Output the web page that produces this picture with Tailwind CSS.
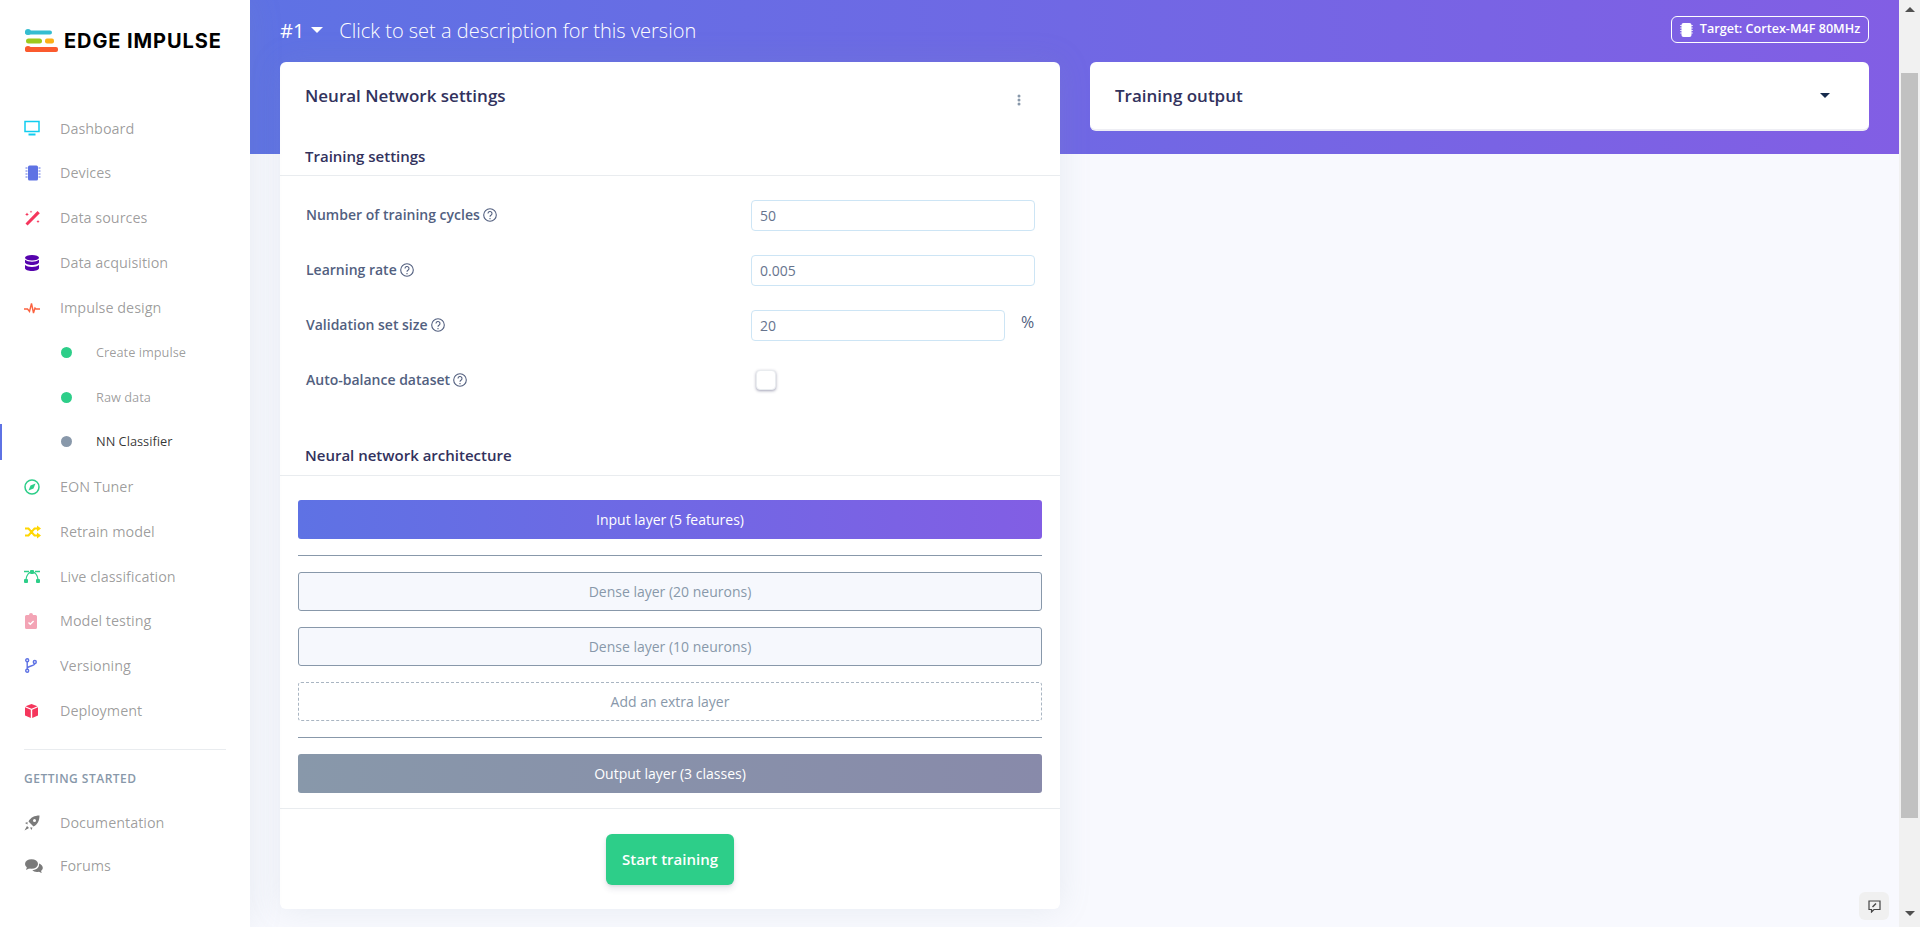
<!DOCTYPE html>
<html lang="en">
<head>
  <meta charset="UTF-8" />
  <title>NN Classifier - Edge Impulse</title>
  <script src="https://cdn.jsdelivr.net/npm/@tailwindcss/browser@4"></script>
</head>
<body class="h-[927px] overflow-hidden bg-[#f8f9fe] font-['Open_Sans',sans-serif]">
<div class="flex h-[927px]">

  <!-- sidebar -->
  <aside class="w-[250px] shrink-0 bg-white flex flex-col shadow-[0_0_32px_rgba(136,152,170,0.15)] z-10">
    <div class="h-[106px] pt-[28px] pl-[24px] flex items-start gap-[4px]">
      <svg width="36" height="26" viewBox="0 0 36 26">
        <rect x="1" y="2.500" width="27" height="4" rx="2" fill="#35bdd0"/><circle cx="4" cy="4" r="3" fill="#35bdd0"/>
        <rect x="2" y="10.500" width="16" height="5" rx="2.500" fill="#9dc91c"/>
        <rect x="21" y="10.500" width="9" height="5" rx="2" fill="#fbb017"/>
        <rect x="1" y="19" width="33" height="5" rx="2" fill="#fb5a2e"/><circle cx="4" cy="21" r="3" fill="#fb5a2e"/>
      </svg>
      <span class="font-['Inter',sans-serif] font-bold text-[20px] leading-[24px] tracking-[0.9px] text-black mt-[1px]">EDGE IMPULSE</span>
    </div>
    <nav class="text-[14.4px] text-black/40 flex flex-col">
      <a class="h-[44.8px] flex items-center"><span class="w-[60px] pl-[24px]"><svg class="w-[16px] h-[16px]" viewBox="0 0 16 16" fill="none" stroke="#11cdef" stroke-width="1.500"><rect x="1" y="1.500" width="14" height="10"/><path d="M4.500 14.500h7" stroke-width="2"/></svg></span>Dashboard</a>
      <a class="h-[44.8px] flex items-center"><span class="w-[60px] pl-[25px]"><svg class="w-[16px] h-[16px]" viewBox="0 0 16 16" fill="#5e72e4"><rect x="3" y="0.500" width="10" height="15" rx="1.500"/><path d="M0.500 3h2M0.500 6h2M0.500 9h2M0.500 12h2M13.500 3h2M13.500 6h2M13.500 9h2M13.500 12h2" stroke="#5e72e4"/></svg></span>Devices</a>
      <a class="h-[44.8px] flex items-center"><span class="w-[60px] pl-[25px]"><svg class="w-[16px] h-[16px]" viewBox="0 0 16 16" fill="#f5365c"><path d="M0.500 13.500 12.500 1l2.300 2.200L2.600 15.500z"/><path d="M2 2.500l.6 1.300 1.300.6-1.300.6L2 6.300l-.6-1.300L.1 4.400l1.300-.6zM6 .5l.4.9.9.4-.9.4L6 3.100l-.4-.9-.9-.4.9-.4zM13 10l.5 1.100 1.100.5-1.100.5-.5 1.100-.5-1.100-1.100-.5 1.100-.5z"/></svg></span>Data sources</a>
      <a class="h-[44.8px] flex items-center"><span class="w-[60px] pl-[25px]"><svg class="w-[14px] h-[16px]" viewBox="0 0 14 16" fill="#5603ad"><ellipse cx="7" cy="2.800" rx="7" ry="2.800"/><path d="M0 4.800v2.400C0 8.700 3.100 10 7 10s7-1.300 7-2.800V4.800C12.500 6 9.900 6.700 7 6.700S1.500 6 0 4.800zM0 10v3.200C0 14.700 3.100 16 7 16s7-1.300 7-2.800V10c-1.500 1.200-4.100 1.900-7 1.900S1.500 11.200 0 10z"/></svg></span>Data acquisition</a>
      <a class="h-[44.8px] flex items-center"><span class="w-[60px] pl-[24px]"><svg class="w-[16px] h-[12px]" viewBox="0 0 16 12" fill="none" stroke="#fb6340" stroke-width="1.400"><path d="M0 7h3.500L5.500 9.500 7.500 1.500 9.500 11 11 6l1 1h4"/></svg></span>Impulse design</a>
      <a class="h-[44.8px] flex items-center text-[12.8px] text-black/40"><span class="w-[96px] pl-[61px]"><span class="block w-[11px] h-[11px] rounded-full bg-[#2dce89]"></span></span>Create impulse</a>
      <a class="h-[44.8px] flex items-center text-[12.8px] text-black/40"><span class="w-[96px] pl-[61px]"><span class="block w-[11px] h-[11px] rounded-full bg-[#2dce89]"></span></span>Raw data</a>
      <a class="h-[44.8px] flex items-center text-[12.8px] text-black/80 relative"><span class="absolute left-0 top-[4px] w-[2px] h-[36px] bg-[#5e72e4]"></span><span class="w-[96px] pl-[61px]"><span class="block w-[11px] h-[11px] rounded-full bg-[#8898aa]"></span></span>NN Classifier</a>
      <a class="h-[44.8px] flex items-center"><span class="w-[60px] pl-[24px]"><svg class="w-[16px] h-[16px]" viewBox="0 0 16 16" fill="none" stroke="#2dce89" stroke-width="1.500"><circle cx="8" cy="8" r="7"/><path d="M11.500 4.500 9.500 9.500 4.500 11.500 6.500 6.500z" fill="#2dce89" stroke="none"/></svg></span>EON Tuner</a>
      <a class="h-[44.8px] flex items-center"><span class="w-[60px] pl-[25px]"><svg class="w-[16px] h-[14px]" viewBox="0 0 16 14" fill="none" stroke="#ffd600" stroke-width="2"><path d="M0 3.500h3.500l6 7H13M0 10.500h3.500l6-7H13"/><path d="M12 0.500 16 3.500l-4 3zM12 7.500l4 3-4 3z" fill="#ffd600" stroke="none"/></svg></span>Retrain model</a>
      <a class="h-[44.8px] flex items-center"><span class="w-[60px] pl-[24px]"><svg class="w-[16px] h-[14px]" viewBox="0 0 16 14" fill="none" stroke="#2dce89" stroke-width="1.300"><path d="M2 10.500C2.500 6 5 3 8 3s5.500 3 6 7.500M0 2.500h5M11 2.500h5"/><rect x="0" y="10" width="4" height="4" rx="1" fill="#2dce89" stroke="none"/><rect x="12" y="10" width="4" height="4" rx="1" fill="#2dce89" stroke="none"/><rect x="6" y="1" width="4" height="4" rx="1" fill="#2dce89" stroke="none"/></svg></span>Live classification</a>
      <a class="h-[44.8px] flex items-center"><span class="w-[60px] pl-[25px]"><svg class="w-[12px] h-[16px]" viewBox="0 0 12 16"><path d="M1.500 2H4a2 2 0 0 1 4 0h2.500A1.500 1.500 0 0 1 12 3.500v11a1.500 1.500 0 0 1-1.500 1.500h-9A1.500 1.500 0 0 1 0 14.500v-11A1.500 1.500 0 0 1 1.500 2z" fill="#f3a4b5"/><path d="M3.500 9.500l1.800 1.800 3.300-3.300" fill="none" stroke="#fff" stroke-width="1.400"/></svg></span>Model testing</a>
      <a class="h-[44.8px] flex items-center"><span class="w-[60px] pl-[25px]"><svg class="w-[12px] h-[15px]" viewBox="0 0 12 15" fill="none" stroke="#5e72e4" stroke-width="1.400"><circle cx="2.200" cy="2.200" r="1.500"/><circle cx="2.200" cy="12.800" r="1.500"/><circle cx="9.800" cy="4" r="1.500"/><path d="M2.200 3.700v7.600M9.800 5.500c0 3-7.600 2-7.600 5"/></svg></span>Versioning</a>
      <a class="h-[44.8px] flex items-center"><span class="w-[60px] pl-[25px]"><svg class="w-[13px] h-[14px]" viewBox="0 0 13 14" fill="#f5365c"><path d="M6.500 0 12.500 2.300 6.500 4.800.5 2.300zM0 3.300l5.800 2.400V14L0 11.500zM13 3.300 7.200 5.700V14l5.800-2.500z"/></svg></span>Deployment</a>
    </nav>
    <div class="mx-[24px] mt-[15.6px] border-t border-[#e9ecef]"></div>
    <h6 class="pl-[24px] mt-[21px] mb-[15px] text-[12px] leading-[16px] font-semibold tracking-[0.5px] text-[#8898aa]">GETTING STARTED</h6>
    <nav class="text-[14.4px] text-black/40 flex flex-col">
      <a class="h-[43px] flex items-center"><span class="w-[60px] pl-[24px]"><svg class="w-[16px] h-[16px]" viewBox="0 0 16 16" fill="#7a7a7a"><path d="M15.500.5C10.500.5 6.500 2.500 4.500 6.500l5 5c4-2 6-6 6-11zM10.500 4a1.500 1.500 0 1 1 0 3 1.500 1.500 0 0 1 0-3zM3.500 7 1 8l2.500 1.500zM8.500 12.500l-1 2.500L6 12.500zM3 11l2 2-4.500 2.500z"/></svg></span>Documentation</a>
      <a class="h-[43px] flex items-center"><span class="w-[60px] pl-[25px]"><svg class="w-[18px] h-[14px]" viewBox="0 0 18 14" fill="#7a7a7a"><ellipse cx="6.500" cy="5" rx="6.500" ry="4.800"/><path d="M2 8 1 11l4-2zM14 4.500c2.200.7 3.800 2.300 3.800 4.300 0 1.300-.7 2.400-1.800 3.200l.9 2-3-1.300c-.6.200-1.400.300-2 .300-2 0-3.700-.7-4.600-1.900 4 .1 7.300-2.700 6.700-6.600z"/></svg></span>Forums</a>
    </nav>
  </aside>

  <!-- main -->
  <main class="flex-1 relative">
    <div class="h-[154px] bg-[linear-gradient(87deg,#5e72e4,#825ee4)] pl-[30px] pr-[30px] flex items-start justify-between text-white">
      <div class="flex items-center h-[62px] text-[20px] font-light">
        <span class="font-normal">#1</span>
        <span class="ml-[7px] mr-[16px] w-0 h-0 border-x-[6px] border-x-transparent border-t-[6px] border-t-white mb-[2px]"></span>
        <span>Click to set a description for this version</span>
      </div>
      <div class="mt-[16px] h-[27px] w-[198px] border border-white rounded-[6px] flex items-center justify-center gap-[7px] text-[12.6px] font-semibold">
        <svg class="w-[13px] h-[14px]" viewBox="0 0 13 14" fill="#fff"><rect x="1.500" y="0" width="10" height="14" rx="2"/><path d="M0 2.500h13M0 5h13M0 7.500h13M0 10h13" stroke="#fff" stroke-width=".7"/></svg>
        Target: Cortex-M4F 80MHz
      </div>
    </div>

    <div class="-mt-[92px] px-[30px] flex gap-[30px] items-start">
      <!-- settings card -->
      <section class="w-[780px] h-[847px] bg-white rounded-[6px] shadow-[0_0_32px_rgba(136,152,170,0.15)]">
        <div class="h-[75px] pl-[25px] pr-[39px] pt-[22px] flex justify-between items-start">
          <h3 class="text-[17px] leading-[24px] font-semibold text-[#32325d]">Neural Network settings</h3>
          <svg class="w-[4px] h-[12px] mt-[10px]" viewBox="0 0 4 12" fill="#8898aa"><circle cx="2" cy="2" r="1.500"/><circle cx="2" cy="6" r="1.500"/><circle cx="2" cy="10" r="1.500"/></svg>
        </div>
        <div class="h-[39px] pl-[25px] border-b border-[#e9ecef]">
          <h4 class="text-[15px] leading-[20px] pt-[9px] font-semibold text-[#32325d]">Training settings</h4>
        </div>
        <form class="pl-[26px] pr-[25px] pt-[24px] flex flex-col gap-[24px] text-[14px] text-[#525f7f]">
          <div class="h-[31px] flex items-center">
            <label class="w-[445px] -mt-[2px] font-semibold flex items-center gap-[3px]">Number of training cycles <svg class="w-[14px] h-[14px]" viewBox="0 0 14 14" fill="none" stroke="#525f7f" stroke-width="1.100"><circle cx="7" cy="7" r="6.300"/><path d="M5 5.500a2 2 0 1 1 3 1.700c-.7.400-1 .8-1 1.500M7 10v1.200"/></svg></label>
            <input value="50" class="w-[284px] h-[31px] px-[8px] border border-[#cde5f5] rounded-[4px] text-[14px] text-[#67748e]" />
          </div>
          <div class="h-[31px] flex items-center">
            <label class="w-[445px] -mt-[2px] font-semibold flex items-center gap-[3px]">Learning rate <svg class="w-[14px] h-[14px]" viewBox="0 0 14 14" fill="none" stroke="#525f7f" stroke-width="1.100"><circle cx="7" cy="7" r="6.300"/><path d="M5 5.500a2 2 0 1 1 3 1.700c-.7.400-1 .8-1 1.500M7 10v1.200"/></svg></label>
            <input value="0.005" class="w-[284px] h-[31px] px-[8px] border border-[#cde5f5] rounded-[4px] text-[14px] text-[#67748e]" />
          </div>
          <div class="h-[31px] flex items-center">
            <label class="w-[445px] -mt-[2px] font-semibold flex items-center gap-[3px]">Validation set size <svg class="w-[14px] h-[14px]" viewBox="0 0 14 14" fill="none" stroke="#525f7f" stroke-width="1.100"><circle cx="7" cy="7" r="6.300"/><path d="M5 5.500a2 2 0 1 1 3 1.700c-.7.400-1 .8-1 1.500M7 10v1.200"/></svg></label>
            <input value="20" class="w-[254px] h-[31px] px-[8px] border border-[#cde5f5] rounded-[4px] text-[14px] text-[#67748e]" />
            <span class="ml-[16px] -mt-[7px] text-[16px]">%</span>
          </div>
          <div class="h-[31px] flex items-center">
            <label class="w-[445px] -mt-[2px] font-semibold flex items-center gap-[3px]">Auto-balance dataset <svg class="w-[14px] h-[14px]" viewBox="0 0 14 14" fill="none" stroke="#525f7f" stroke-width="1.100"><circle cx="7" cy="7" r="6.300"/><path d="M5 5.500a2 2 0 1 1 3 1.700c-.7.400-1 .8-1 1.500M7 10v1.200"/></svg></label>
            <span class="ml-[5px] -mt-[2px] w-[20px] h-[20px] bg-white rounded-[4px] border border-[#e9ecef] shadow-[0_1px_3px_rgba(50,50,93,0.45)]"></span>
          </div>
        </form>
        <div class="mt-[48px] h-[31px] pl-[25px] border-b border-[#e9ecef] box-content">
          <h4 class="text-[15px] leading-[20px] pt-[1px] font-semibold text-[#32325d]">Neural network architecture</h4>
        </div>
        <div class="px-[18px] pt-[24px] pb-[15px] flex flex-col border-b border-[#e9ecef] text-[14px]">
          <div class="h-[39px] rounded-[3px] bg-[linear-gradient(87deg,#5e72e4,#825ee4)] text-white flex items-center justify-center">Input layer (5 features)</div>
          <div class="my-[16px] border-t border-[#8898aa]"></div>
          <div class="h-[39px] rounded-[3px] bg-[#f6f8fd] border border-[#8898aa] text-[#8898aa] flex items-center justify-center">Dense layer (20 neurons)</div>
          <div class="mt-[16px] h-[39px] rounded-[3px] bg-[#f6f8fd] border border-[#8898aa] text-[#8898aa] flex items-center justify-center">Dense layer (10 neurons)</div>
          <div class="mt-[16px] h-[39px] rounded-[3px] border border-dashed border-[#a9b5c2] text-[#8898aa] flex items-center justify-center">Add an extra layer</div>
          <div class="my-[16px] border-t border-[#8898aa]"></div>
          <div class="h-[39px] rounded-[3px] bg-[linear-gradient(87deg,#8898aa,#888aaa)] text-white flex items-center justify-center">Output layer (3 classes)</div>
        </div>
        <div class="pt-[25px] flex justify-center">
          <button class="w-[128px] h-[51px] rounded-[6px] bg-[#2dce89] text-white text-[15px] font-semibold shadow-[0_4px_6px_rgba(50,50,93,0.11),0_1px_3px_rgba(0,0,0,0.08)]">Start training</button>
        </div>
      </section>

      <!-- output card -->
      <section class="flex-1 h-[69px] bg-white rounded-[6px] border-b-2 border-[#eeeef4] pl-[25px] pr-[39px] flex items-center justify-between">
        <h3 class="text-[17px] font-semibold text-[#32325d]">Training output</h3>
        <span class="w-0 h-0 border-x-[5px] border-x-transparent border-t-[5px] border-t-[#172b4d]"></span>
      </section>
    </div>

    <button class="absolute right-[10px] top-[892px] w-[30px] h-[28px] rounded-[6px] bg-[#f0f0f0] flex items-center justify-center">
      <svg class="w-[13px] h-[13px]" viewBox="0 0 13 13" fill="none" stroke="#444" stroke-width="1.200"><path d="M1 1h11v8.500H6L3.500 12V9.500H1z"/><path d="M4.500 7 8 3.500" stroke-width="1.500"/></svg>
    </button>
  </main>

  <!-- scrollbar -->
  <div class="w-[21px] shrink-0 bg-[#f1f1f1] flex flex-col items-center">
    <span class="mt-[7px] w-0 h-0 border-x-[5px] border-x-transparent border-b-[5px] border-b-[#505050]"></span>
    <span class="mt-[61px] w-[17px] h-[745px] bg-[#c1c1c1]"></span>
    <span class="mt-[93px] w-0 h-0 border-x-[5px] border-x-transparent border-t-[5px] border-t-[#505050]"></span>
  </div>
</div>
</body>
</html>
